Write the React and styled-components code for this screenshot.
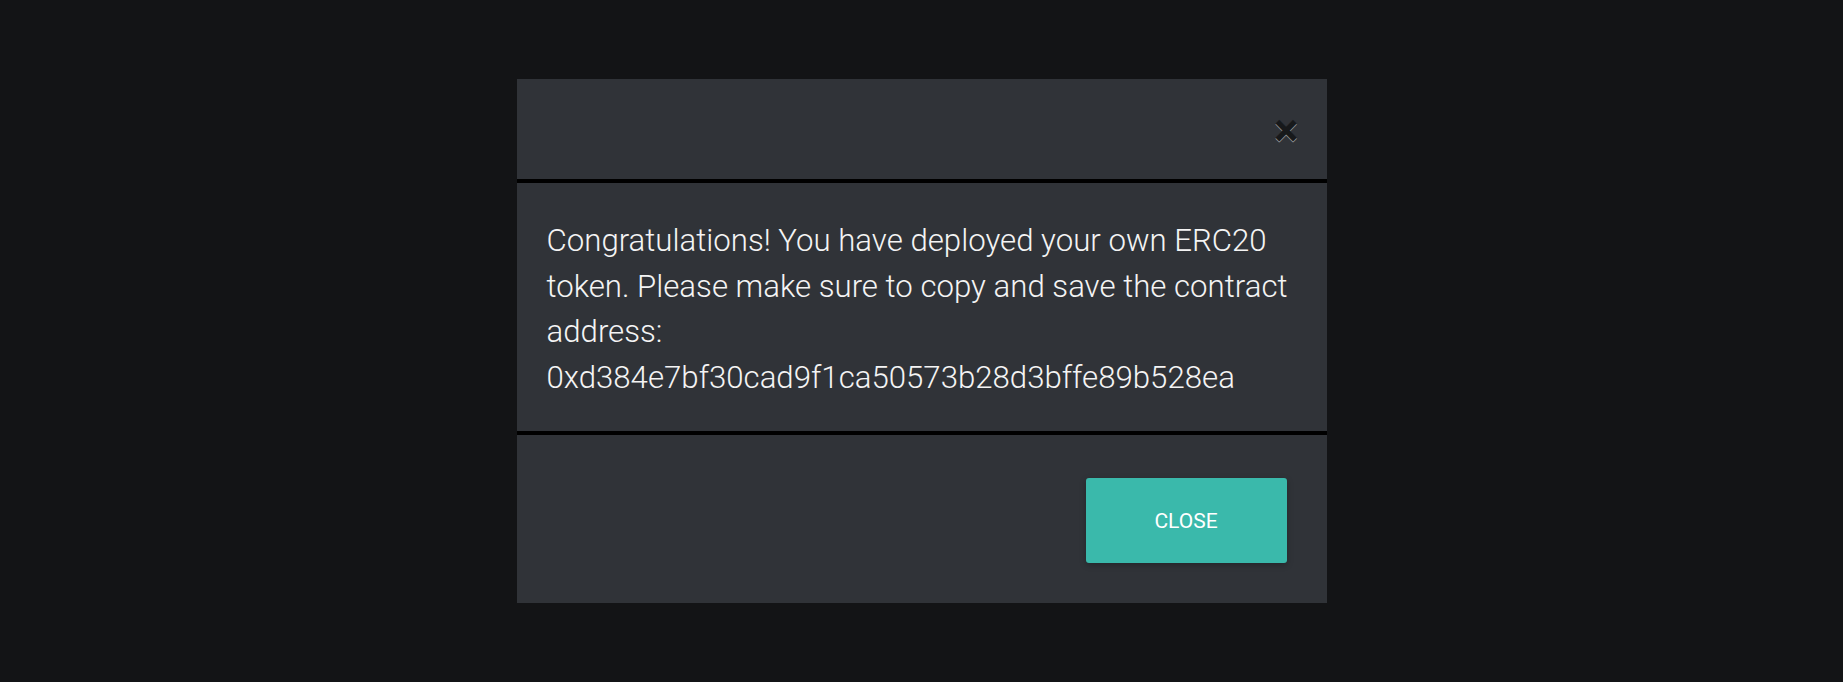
import React from "react";
import styled, { createGlobalStyle } from "styled-components";

const GlobalStyle = createGlobalStyle`
  html, body {
    margin: 0;
    padding: 0;
    background-color: #131416;
  }
  * {
    box-sizing: border-box;
  }
`;

const App = () => {
  return (
    <>
      <GlobalStyle />
      <Backdrop>
        <ModalBox>
          <ModalHeader>
            <CloseIcon aria-label="Close">×</CloseIcon>
          </ModalHeader>
          <ModalBody>
            <Message>
              Congratulations! You have deployed your own ERC20 token. Please
              make sure to copy and save the contract address:
              0xd384e7bf30cad9f1ca50573b28d3bffe89b528ea
            </Message>
          </ModalBody>
          <ModalFooter>
            <CloseButton>CLOSE</CloseButton>
          </ModalFooter>
        </ModalBox>
      </Backdrop>
    </>
  );
};

const Backdrop = styled.div`
  display: flex;
  align-items: center;
  justify-content: center;
  min-height: 100vh;
  width: 100%;
  background-color: #131416;
  font-family: Roboto, "Liberation Sans", sans-serif;
`;

const ModalBox = styled.div`
  display: flex;
  flex-direction: column;
  width: 810px;
  background-color: #303338;
`;

const ModalHeader = styled.div`
  display: flex;
  align-items: center;
  justify-content: flex-end;
  height: 104px;
  padding: 0 28px;
  border-bottom: 4px solid #000;
`;

const CloseIcon = styled.button`
  border: none;
  background: transparent;
  padding: 0;
  margin-top: 2px;
  font-family: Roboto, "Liberation Sans", sans-serif;
  font-size: 46px;
  font-weight: 700;
  line-height: 1;
  color: #000;
  text-shadow: 0 1px 0 #fff;
  opacity: 0.5;
  cursor: pointer;
`;

const ModalBody = styled.div`
  display: flex;
  align-items: center;
  height: 252px;
  padding: 4px 30px 0;
  border-bottom: 4px solid #000;
`;

const Message = styled.p`
  margin: 0;
  font-size: 31.2px;
  font-weight: 300;
  line-height: 45.5px;
  color: #f4f4f4;
`;

const ModalFooter = styled.div`
  display: flex;
  align-items: center;
  justify-content: flex-end;
  height: 168px;
  padding: 3px 40px 0;
`;

const CloseButton = styled.button`
  width: 201px;
  height: 85px;
  border: none;
  border-radius: 3px;
  background-color: #3ab9ab;
  box-shadow: 0 2px 6px rgba(0, 0, 0, 0.25);
  color: #fff;
  font-family: Roboto, "Liberation Sans", sans-serif;
  font-size: 21px;
  font-weight: 400;
  cursor: pointer;
`;

export default App;
